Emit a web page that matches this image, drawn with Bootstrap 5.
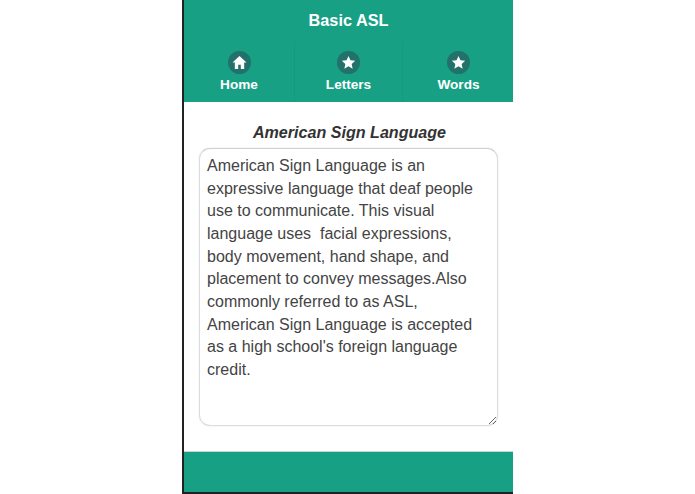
<!DOCTYPE html>
<html lang="en">
<head>
<meta charset="utf-8">
<title>Basic ASL</title>
<link rel="stylesheet" href="https://cdn.jsdelivr.net/npm/bootstrap@5.3.0/dist/css/bootstrap.min.css">
<style>
html, body { height: 100%; background: #fff; }
body { font-family: "Liberation Sans", Arial, sans-serif; color: #333; overflow: hidden; }
.phone-shell { width: 331px; height: 494px; margin-left: 182px; border-left: 2px solid #222; border-bottom: 2px solid #222; }
.top-bar { height: 42px; background: #18a085; color: #fff; font-size: 16.3px; padding-bottom: 1px; }
.tab-bar { height: 60px; background: #18a085; display: grid; grid-template-columns: 111px 108px 1fr; }
.tab-item { color: #fff; font-size: 13.6px; font-weight: 700; line-height: 16px; text-decoration: none; border-right: 1px solid #17997f; padding-top: 9px; }
.tab-item:last-child { border-right: 0; padding-left: 1px; }
.tab-item:hover { color: #fff; }
.tab-disc { width: 23px; height: 23px; border-radius: 50%; background: #22716a; margin-bottom: 3px; }
.tab-disc svg { width: 15px; height: 15px; fill: #fff; }
.page-body { flex: 1; min-height: 0; padding: 21px 15px 25px; }
.page-heading { font-size: 16.1px; line-height: 19px; font-weight: 700; font-style: italic; color: #333; margin: 0 0 6px; padding-left: 2px; }
.asl-text { flex: 1; width: 100%; display: block; font-family: inherit; font-size: 16px; line-height: 22.65px; color: #444; padding: 6px 15px 5px 7px; border: 1px solid #dcdcdc; border-top-color: #cfcfcf; border-radius: 11px; background: #fff; outline: 0; box-shadow: 0 0 2px rgba(0,0,0,.1); overflow: hidden; }
.bottom-bar { height: 41px; flex: none; background: #18a085; border-top: 1px solid #c9d6d2; }
</style>
</head>
<body>
<div class="phone-shell d-flex flex-column">
  <header class="top-bar d-flex align-items-center justify-content-center fw-bold">Basic ASL</header>
  <nav class="tab-bar">
    <a href="#" class="tab-item d-flex flex-column align-items-center">
      <span class="tab-disc d-flex align-items-center justify-content-center"><svg viewBox="0 0 16 16"><path d="M8 1 0.5 8H3v7h3.6v-4.6h2.8V15H13V8h2.5z"/></svg></span>Home</a>
    <a href="#" class="tab-item d-flex flex-column align-items-center">
      <span class="tab-disc d-flex align-items-center justify-content-center"><svg viewBox="0 0 16 16"><path d="M8 1l2.1 4.6 5 .6-3.7 3.4 1 5L8 11.9l-4.4 2.7 1-5L.9 6.2l5-.6z"/></svg></span>Letters</a>
    <a href="#" class="tab-item d-flex flex-column align-items-center">
      <span class="tab-disc d-flex align-items-center justify-content-center"><svg viewBox="0 0 16 16"><path d="M8 1l2.1 4.6 5 .6-3.7 3.4 1 5L8 11.9l-4.4 2.7 1-5L.9 6.2l5-.6z"/></svg></span>Words</a>
  </nav>
  <main class="page-body d-flex flex-column">
    <h1 class="page-heading text-center">American Sign Language</h1>
    <textarea class="asl-text" readonly>American Sign Language is an expressive language that deaf people use to communicate. This visual language uses  facial expressions, body movement, hand shape, and placement to convey messages.Also commonly referred to as ASL, American Sign Language is accepted as a high school's foreign language credit.</textarea>
  </main>
  <footer class="bottom-bar"></footer>
</div>
<script src="https://cdn.jsdelivr.net/npm/bootstrap@5.3.0/dist/js/bootstrap.bundle.min.js"></script>
</body>
</html>
